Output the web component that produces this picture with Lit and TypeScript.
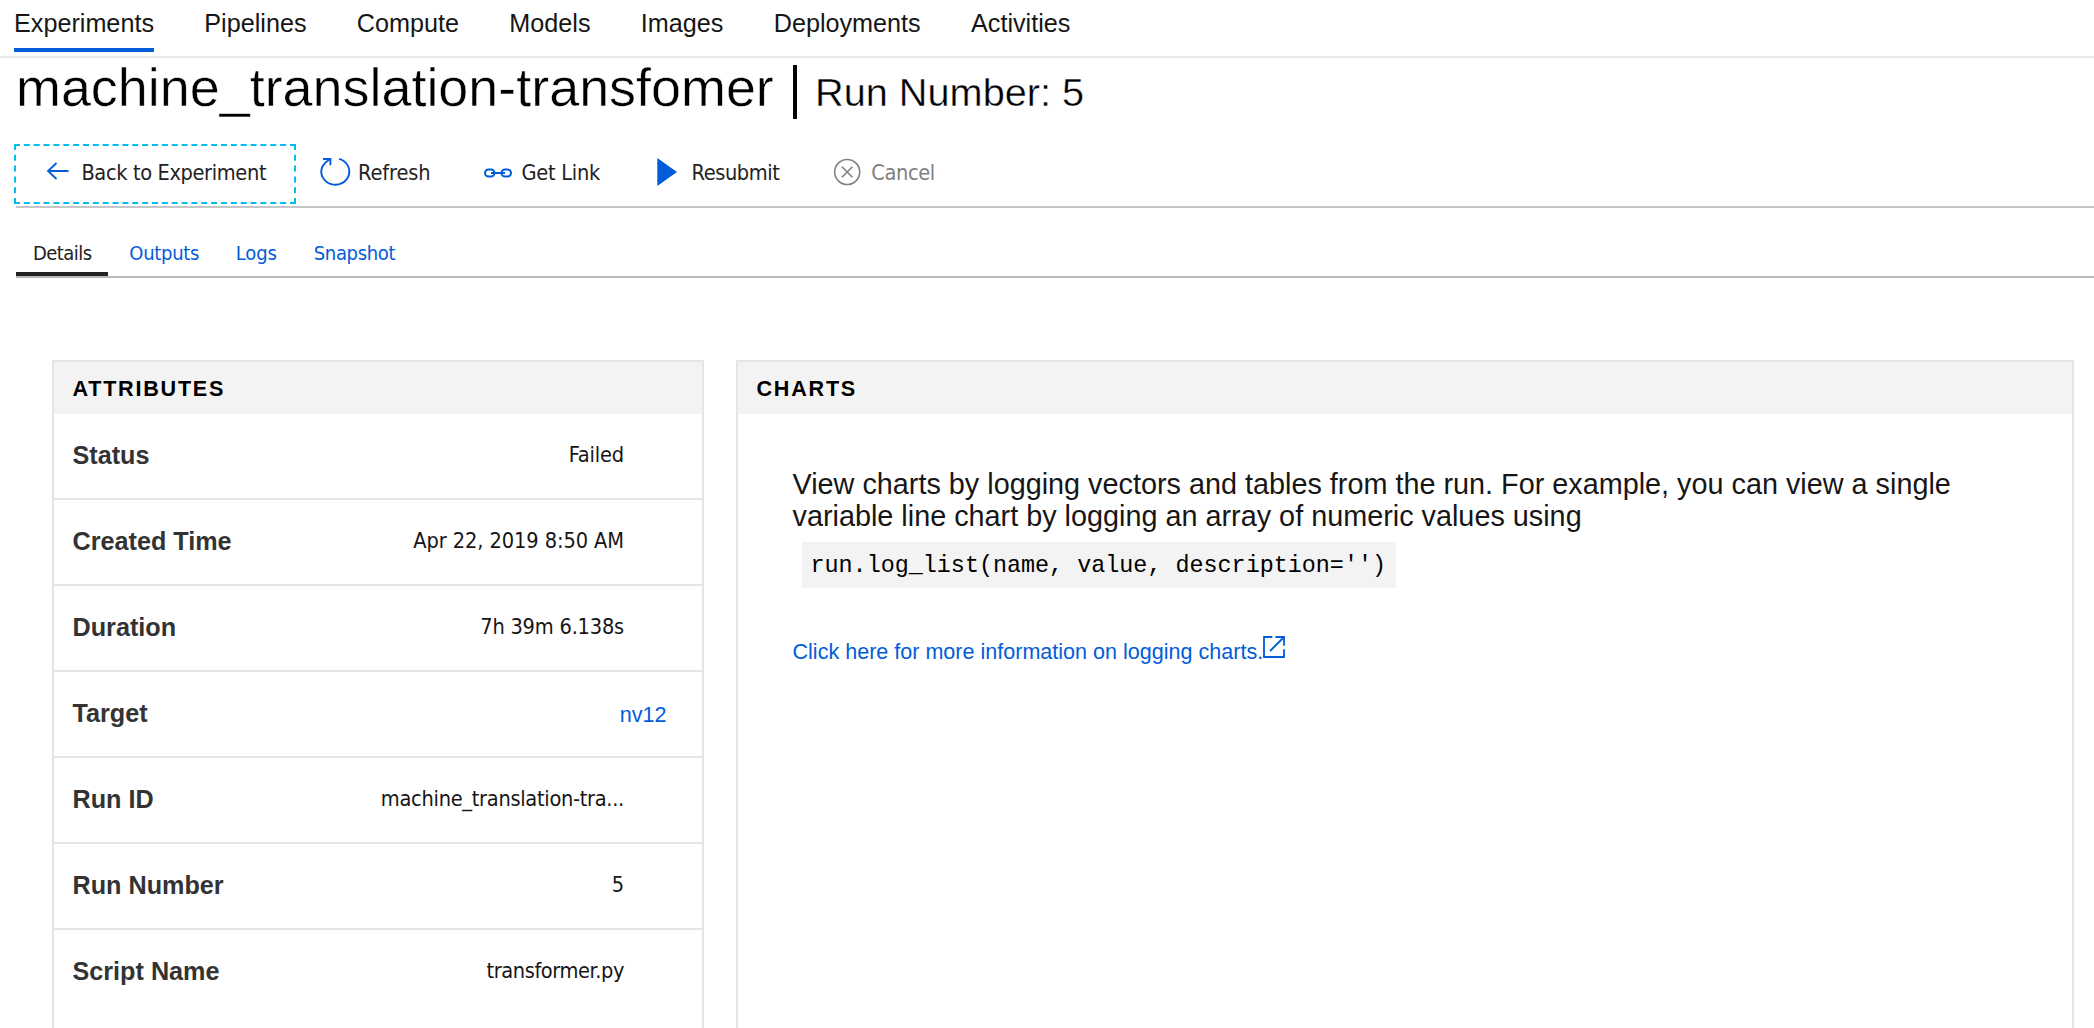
import { LitElement, html, css, TemplateResult } from "lit";
import { customElement, state } from "lit/decorators.js";
import { classMap } from "lit/directives/class-map.js";
import { styleMap } from "lit/directives/style-map.js";

interface Label {
  text: string;
  /** tracking in px */
  track: number;
}

interface Attribute {
  label: string;
  value: Label;
  link?: boolean;
}

const NAV = ["Experiments", "Pipelines", "Compute", "Models", "Images", "Deployments", "Activities"];

const TABS: Label[] = [
  { text: "Details", track: -0.55 },
  { text: "Outputs", track: -0.3 },
  { text: "Logs", track: -0.1 },
  { text: "Snapshot", track: -0.35 },
];

const ATTRIBUTES: Attribute[] = [
  { label: "Status", value: { text: "Failed", track: -0.15 } },
  { label: "Created Time", value: { text: "Apr 22, 2019 8:50 AM", track: -0.08 } },
  { label: "Duration", value: { text: "7h 39m 6.138s", track: -0.2 } },
  { label: "Target", value: { text: "nv12", track: 0 }, link: true },
  { label: "Run ID", value: { text: "machine_translation-tra...", track: -0.29 } },
  { label: "Run Number", value: { text: "5", track: 0 } },
  { label: "Script Name", value: { text: "transformer.py", track: -0.4 } },
];

const backIcon = html`<svg width="24" height="32" viewBox="0 0 24 32" fill="none" stroke="#015cda" stroke-width="1.8">
  <path d="M2 15H22.5M10.5 7L2 15L10.5 23" />
</svg>`;

const refreshIcon = html`<svg width="34" height="32" viewBox="0 0 34 32" fill="none" stroke="#015cda" stroke-width="1.9">
  <path d="M21 2.85A14 13.2 0 1 1 4 11.5Q6 7 12 3.2" />
  <path d="M5 3H12.4V9.3" />
</svg>`;

const linkIcon = html`<svg width="32" height="32" viewBox="0 0 32 32" fill="none" stroke="#015cda" stroke-width="2">
  <rect x="3" y="13.5" width="9.5" height="7" rx="3.5" />
  <rect x="19.5" y="13.5" width="9.5" height="7" rx="3.5" />
  <path d="M9 17H23" />
</svg>`;

const playIcon = html`<svg width="24" height="32" viewBox="0 0 24 32">
  <path d="M2.3 2L22 16L2.3 30Z" fill="#015cda" />
</svg>`;

const cancelIcon = html`<svg width="31" height="32" viewBox="0 0 31 32" fill="none" stroke="#808080" stroke-width="1.6">
  <circle cx="15.2" cy="16" r="12.5" />
  <path d="M10 10.7L20.4 21.3M20.4 10.7L10 21.3" />
</svg>`;

const externalIcon = html`<svg width="22" height="22" viewBox="0 0 22 22" fill="none" stroke="#015cda" stroke-width="1.8">
  <path d="M9.3 1H1V21H21V13.3" />
  <path d="M12.5 1H21V9.7M21 1L7 15" />
</svg>`;

@customElement("app-root")
export class AppRoot extends LitElement {
  @state() private activeNav = 0;
  @state() private activeTab = 0;

  static styles = css`
    :host {
      display: block;
      height: 1028px;
      overflow: hidden;
      background: #fff;
      color: #161616;
      font-family: "Liberation Sans", Arial, sans-serif;
      white-space: nowrap;
    }
    * {
      box-sizing: border-box;
    }
    svg {
      display: block;
      flex: none;
    }

    .nav {
      display: flex;
      gap: 50.3px;
      height: 58px;
      padding-left: 14px;
      border-bottom: 2px solid #e8e8e8;
      font-size: 25.2px;
      line-height: 46px;
    }
    .nav-item {
      height: 52px;
    }
    .nav-item.active {
      border-bottom: 4px solid #015cda;
    }

    .title {
      display: flex;
      align-items: baseline;
      height: 86px;
      padding-left: 16px;
      color: #000;
      line-height: 59px;
    }
    .name {
      width: 757px;
      font-size: 53.9px;
      -webkit-text-stroke: 0.5px #fff;
    }
    .bar {
      align-self: flex-start;
      width: 4px;
      height: 54px;
      margin: 7px 18px 0 20px;
      background: #000;
    }
    .run {
      font-size: 39.7px;
      -webkit-text-stroke: 0.4px #fff;
    }

    .ui {
      font-family: "DejaVu Sans Condensed", "DejaVu Sans", sans-serif;
      font-stretch: condensed;
    }
    .tools {
      display: grid;
      grid-template-columns: 302px 164px 173px 177px auto;
      height: 64px;
      margin-left: 16px;
      border-bottom: 2px solid #c6c6c6;
      font-size: 21.6px;
      line-height: 57px;
      color: #222;
    }
    .tool {
      display: flex;
    }
    .tool svg {
      margin-top: 12px;
    }
    .tool.back {
      width: 282px;
      height: 60px;
      margin-left: -2px;
      padding-left: 30px;
      border: 2px dashed #00bcf2;
      line-height: 53px;
    }
    .tool.back svg {
      margin-top: 10px;
    }
    .tool.disabled {
      color: #808080;
    }

    .tabs {
      display: grid;
      grid-template-columns: 113.3px 106.5px 78px auto;
      height: 70px;
      margin-left: 16px;
      border-bottom: 2px solid #b8b8b8;
      font-size: 20px;
      line-height: 30px;
      color: #015cda;
    }
    .tab {
      padding-top: 30px;
      height: 68px;
    }
    .tab.active {
      width: 92px;
      padding-left: 17px;
      border-bottom: 4px solid #222;
      color: #222;
    }

    .cards {
      display: grid;
      grid-template-columns: 652px 1fr;
      gap: 32px;
      height: 750px;
      padding: 82px 20px 0 52px;
    }
    .card {
      border: 2px solid #e5e5e5;
      border-bottom: 0;
    }
    .card-title {
      height: 52px;
      padding-left: 18.5px;
      background: #f3f3f3;
      color: #000;
      font-size: 21.6px;
      font-weight: bold;
      letter-spacing: 1.75px;
      line-height: 53px;
    }
    .row {
      display: flex;
      justify-content: space-between;
      height: 86px;
      padding: 0 78px 0 18.5px;
      border-bottom: 2px solid #e5e5e5;
    }
    .row:last-child {
      border-bottom: 0;
    }
    .row.linked {
      padding-right: 35.5px;
    }
    .label {
      color: #333;
      font-size: 25.2px;
      font-weight: bold;
      line-height: 83px;
    }
    .value {
      font-size: 21.6px;
      line-height: 81px;
    }
    .value.link {
      color: #015cda;
      line-height: 85px;
    }

    .chart-body {
      padding: 54px 0 0 54.5px;
    }
    .text {
      max-width: 1180px;
      margin: 0;
      font-size: 28.8px;
      line-height: 32px;
      white-space: normal;
    }
    .code {
      width: 594px;
      height: 46px;
      margin: 10px 0 48px 9.5px;
      padding-left: 8.5px;
      background: #f3f3f3;
      color: #000;
      font: 23.4px/49px "Liberation Mono", "Courier New", monospace;
    }
    .more {
      display: flex;
      color: #015cda;
      font-size: 21.55px;
      line-height: 31px;
    }
  `;

  private tool(icon: TemplateResult, text: string, track: number, gap: number, kind = "") {
    return html`<div class="tool ${kind}" style=${styleMap({ gap: `${gap}px` })}>
      ${icon}<span style=${styleMap({ letterSpacing: `${track}px` })}>${text}</span>
    </div>`;
  }

  private row({ label, value, link = false }: Attribute) {
    return html`<div class=${classMap({ row: true, linked: link })}>
      <span class="label">${label}</span>
      <span
        class=${classMap({ value: true, ui: !link, link })}
        style=${styleMap({ letterSpacing: `${value.track}px` })}
        >${value.text}</span
      >
    </div>`;
  }

  render() {
    return html`
      <nav class="nav">
        ${NAV.map(
          (name, i) => html`<span
            class=${classMap({ "nav-item": true, active: i === this.activeNav })}
            @click=${() => (this.activeNav = i)}
            >${name}</span
          >`
        )}
      </nav>
      <header class="title">
        <span class="name">machine_translation-transfomer</span>
        <i class="bar"></i>
        <span class="run">Run Number: 5</span>
      </header>
      <div class="tools ui">
        ${this.tool(backIcon, "Back to Experiment", -0.36, 11.4, "back")}
        ${this.tool(refreshIcon, "Refresh", -0.1, 6)}
        ${this.tool(linkIcon, "Get Link", -0.25, 7.5)}
        ${this.tool(playIcon, "Resubmit", -0.4, 12.5)}
        ${this.tool(cancelIcon, "Cancel", -0.4, 8.3, "disabled")}
      </div>
      <div class="tabs ui">
        ${TABS.map(
          (tab, i) => html`<span
            class=${classMap({ tab: true, active: i === this.activeTab })}
            style=${styleMap({ letterSpacing: `${tab.track}px` })}
            @click=${() => (this.activeTab = i)}
            >${tab.text}</span
          >`
        )}
      </div>
      <main class="cards">
        <section class="card">
          <div class="card-title">ATTRIBUTES</div>
          <div class="rows">${ATTRIBUTES.map((a) => this.row(a))}</div>
        </section>
        <section class="card">
          <div class="card-title">CHARTS</div>
          <div class="chart-body">
            <p class="text">
              View charts by logging vectors and tables from the run. For example, you can view a single variable line
              chart by logging an array of numeric values using
            </p>
            <div class="code">run.log_list(name, value, description='')</div>
            <a class="more">Click here for more information on logging charts.${externalIcon}</a>
          </div>
        </section>
      </main>
    `;
  }
}
